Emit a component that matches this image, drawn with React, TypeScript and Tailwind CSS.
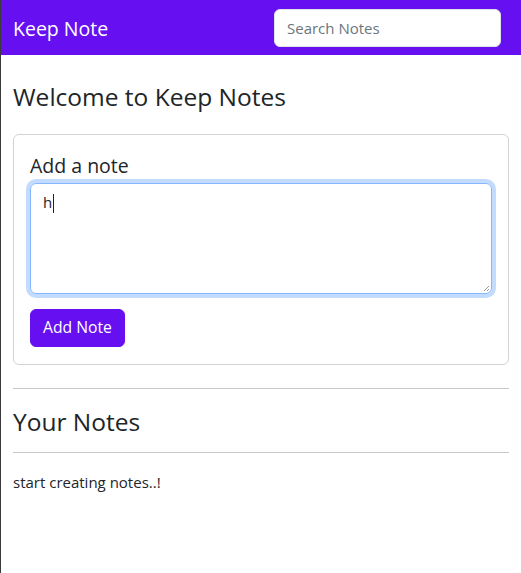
import React from "react";

export default function App() {
  const font = { fontFamily: '"Open Sans", "Noto Sans", sans-serif' };
  return (
    <div className="min-h-[573px] border-l border-[#3a3a3a] bg-white text-[#212529]" style={font}>
      <nav className="h-[55px] bg-[#6610f2] flex items-center justify-between pl-3 pr-5">
        <span className="text-white text-[19.5px] leading-none mt-[2px]">Keep Note</span>
        <input
          className="w-[227px] h-[38px] rounded-md border border-[#dee2e6] bg-white px-3 text-[15px] text-[#212529] placeholder:text-[#6c757d] outline-none"
          placeholder="Search Notes"
        />
      </nav>
      <div className="px-3">
        <h3 className="mt-[27px] mb-[23px] text-[24.5px] leading-[1.2]">Welcome to Keep Notes</h3>
        <div className="rounded-md border border-[#d3d3d3] px-4 pt-4 pb-[17px]">
          <h5 className="text-[19.5px] leading-[1.2] mt-[3px] mb-[5px]">Add a note</h5>
          <div className="h-[111px] rounded-md border border-[#86b7fe] shadow-[0_0_0_4px_rgba(13,110,253,0.25)] px-3 py-[6px] text-[15px] leading-6 relative">
            <span>h</span>
            <span className="inline-block w-px h-[19px] bg-[#212529] align-middle ml-[1px]"></span>
            <svg className="absolute right-[1px] bottom-[1px]" width="8" height="8" viewBox="0 0 8 8">
              <path d="M7 2 L2 7 M7 5 L5 7" stroke="#9a9a9a" strokeWidth="1" />
            </svg>
          </div>
          <button className="mt-[15px] h-[38px] px-3 rounded-md border border-[#6610f2] bg-[#6610f2] text-white text-[15.7px]">Add Note</button>
        </div>
        <hr className="mt-[23px] border-t border-[#c8c8c8]" />
        <h3 className="mt-[18px] mb-[16px] text-[24.5px] leading-[1.2]">Your Notes</h3>
        <hr className="border-t border-[#c8c8c8]" />
        <p className="mt-[18px] text-[15px]">start creating notes..!</p>
      </div>
    </div>
  );
}
